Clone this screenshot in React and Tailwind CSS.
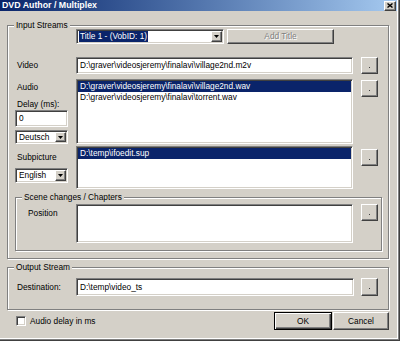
import React from "react";

const raised =
  "border border-white border-r-[#404040] border-b-[#404040] shadow-[inset_-1px_-1px_0_#808080] bg-[#d4d0c8]";
const sunken =
  "border border-[#808080] border-r-white border-b-white shadow-[inset_1px_1px_0_#404040,inset_-1px_-1px_0_#d4d0c8] bg-white";

function Group({ label, className, children }) {
  return (
    <div className={`relative border border-[#808080] shadow-[inset_1px_1px_0_#fff,1px_1px_0_#fff] ${className}`}>
      <span className="absolute -top-[6px] left-[6px] px-[2px] bg-[#d4d0c8] leading-[11px]">{label}</span>
      {children}
    </div>
  );
}

function Browse({ className = "" }) {
  return (
    <button className={`${raised} w-[17px] h-[17px] flex items-center justify-center shrink-0 ${className}`}>
      <span className="block w-[1px] h-[1px] bg-[#404040] mt-[3px]" />
    </button>
  );
}

function Arrow() {
  return (
    <div className={`${raised} w-[11px] h-full flex items-center justify-center shrink-0`}>
      <svg width="5" height="3" viewBox="0 0 5 3">
        <polygon points="0,0 5,0 2.5,3" fill="#000" />
      </svg>
    </div>
  );
}

function Combo({ value, className = "", selected = false }) {
  return (
    <div className={`${sunken} flex items-stretch p-[1px] ${className}`}>
      <div className="flex-1 flex items-center pl-[1px] overflow-hidden whitespace-nowrap">
        <span className={selected ? "bg-[#0a246a] text-white px-[1px]" : "pl-[1px]"}>{value}</span>
      </div>
      <Arrow />
    </div>
  );
}

function ListBox({ items, className = "" }) {
  return (
    <div className={`${sunken} p-[1px] ${className}`}>
      {items.map((t, i) => (
        <div
          key={t}
          className={`h-[11px] leading-[11px] pl-[2px] whitespace-nowrap ${i === 0 && items.selected !== false ? "bg-[#0a246a] text-white" : ""}`}
        >
          {t}
        </div>
      ))}
    </div>
  );
}

export default function App() {
  const audio = [
    "D:\\graver\\videosjeremy\\finalavi\\village2nd.wav",
    "D:\\graver\\videosjeremy\\finalavi\\torrent.wav",
  ];
  return (
    <div className="w-[400px] h-[341px] bg-[#d4d0c8] overflow-hidden flex flex-col font-['Liberation_Sans',Arial,sans-serif] text-[8.3px] text-black shadow-[inset_-1px_-1px_0_#404040,inset_-2px_-2px_0_#808080,inset_-3px_-3px_0_#fff]">
      {/* title bar */}
      <div className="h-[11px] w-[397px] flex items-center bg-gradient-to-r from-[#0a246a] to-[#a6caf0] shrink-0">
        <span className="pl-[2px] text-white font-bold text-[8.8px] leading-[11px]">DVD Author / Multiplex</span>
        <button className={`${raised} ml-auto mr-[1px] w-[12px] h-[10px] flex items-center justify-center`}>
          <svg width="6" height="5" viewBox="0 0 6 5">
            <path d="M0.5 0.5 L5.5 4.5 M5.5 0.5 L0.5 4.5" stroke="#000" strokeWidth="1.4" />
          </svg>
        </button>
      </div>

      {/* input streams */}
      <Group label="Input Streams" className="ml-[7px] mt-[14px] w-[382px] h-[234px] shrink-0">
        <div className="flex pl-[68px] pt-[3px]">
          <Combo value="Title 1 - (VobID: 1)" selected className="w-[148px] h-[15px]" />
          <button className={`${raised} ml-[3px] w-[107px] h-[15px] text-[#808080] [text-shadow:1px_1px_0_#fff]`}>
            Add Title
          </button>
        </div>

        <div className="flex items-center mt-[13px]">
          <div className="w-[68px] pl-[9px]">Video</div>
          <div className={`${sunken} w-[277px] h-[17px] flex items-center pl-[3px] whitespace-nowrap`}>
            D:\graver\videosjeremy\finalavi\village2nd.m2v
          </div>
          <Browse className="ml-[8px]" />
        </div>

        <div className="flex items-start mt-[5px]">
          <div className="w-[68px] pl-[7px] flex flex-col">
            <div className="pl-[2px] mt-[2px] leading-[12px]">Audio</div>
            <div className="pl-[2px] mt-[5px] leading-[12px]">Delay (ms):</div>
            <div className={`${sunken} w-[53px] h-[17px] flex items-center pl-[3px]`}>0</div>
            <Combo value="Deutsch" className="mt-[3px] w-[53px] h-[14px]" />
          </div>
          <ListBox items={audio} className="w-[277px] h-[65px]" />
          <Browse className="ml-[8px] mt-[1px]" />
        </div>

        <div className="flex items-start mt-[2px]">
          <div className="w-[68px] pl-[7px] flex flex-col">
            <div className="pl-[2px] mt-[5px] leading-[12px]">Subpicture</div>
            <Combo value="English" className="mt-[5px] w-[53px] h-[15px]" />
          </div>
          <ListBox items={["D:\\temp\\ifoedit.sup"]} className="w-[277px] h-[43px]" />
          <Browse className="ml-[8px] mt-[3px]" />
        </div>

        <Group label="Scene changes / Chapters" className="ml-[7px] mt-[8px] w-[367px] h-[54px]">
          <div className="flex items-start pt-[6px]">
            <div className="w-[60px] pl-[12px] mt-[3px] leading-[12px]">Position</div>
            <div className={`${sunken} w-[277px] h-[39px]`} />
            <Browse className="ml-[8px]" />
          </div>
        </Group>
      </Group>

      {/* output stream */}
      <Group label="Output Stream" className="ml-[7px] mt-[8px] w-[382px] h-[43px] shrink-0">
        <div className="flex items-center pt-[10px]">
          <div className="w-[68px] pl-[9px]">Destination:</div>
          <div className={`${sunken} w-[278px] h-[18px] flex items-center pl-[3px]`}>D:\temp\video_ts</div>
          <Browse className="ml-[7px] h-[18px]" />
        </div>
      </Group>

      {/* bottom row */}
      <div className="flex items-center mt-[2px] h-[18px] shrink-0">
        <div className={`${sunken} ml-[16px] w-[10px] h-[10px]`} />
        <span className="ml-[4px]">Audio delay in ms</span>
        <button className="ml-auto w-[58px] h-[18px] border border-black bg-[#d4d0c8] shadow-[inset_1px_1px_0_#fff,inset_-1px_-1px_0_#404040,inset_-2px_-2px_0_#808080]">
          OK
        </button>
        <button className={`${raised} ml-[1px] mr-[11px] w-[56px] h-[18px]`}>Cancel</button>
      </div>
    </div>
  );
}
